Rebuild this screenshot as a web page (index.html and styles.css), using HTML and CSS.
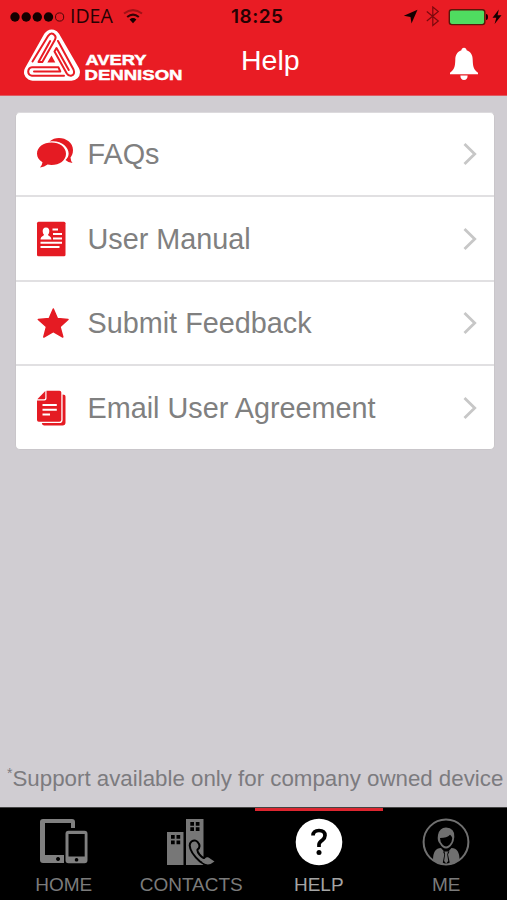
FILE: index.html
```html
<!DOCTYPE html>
<html lang="en">
<head>
<meta charset="utf-8">
<title>Help</title>
<link rel="stylesheet" href="styles.css">
</head>
<body>
<div class="app">
  <header class="header">
    <div class="status">
      <svg class="signal" width="55" height="12" viewBox="0 0 55 12"><g fill="#160000"><circle cx="5" cy="6" r="4.7"/><circle cx="16.2" cy="6" r="4.7"/><circle cx="27.3" cy="6" r="4.7"/><circle cx="38.5" cy="6" r="4.7"/></g><circle cx="49.6" cy="6" r="4.1" fill="none" stroke="#4b0708" stroke-width="1"/></svg>
      <span class="carrier">IDEA</span>
      <svg class="wifi" width="20" height="15" viewBox="0 0 20 15"><g fill="none" stroke-width="2.1"><path d="M1 4.500Q10-2.300 19 4.500" stroke="#a11116"/><path d="M4.200 8Q10 3.200 15.800 8" stroke="#360305"/></g><path d="M6.600 10.400Q10 7.600 13.400 10.400L10 14.200z" fill="#160000"/></svg>
      <time class="clock">18:25</time>
      <svg class="indicators" width="104" height="22" viewBox="403 5 104 22"><path d="M403.800 14.800L417.500 8.800 411.500 22.500 410.500 16z" fill="#160000"/><path d="M426.800 10.500L438.300 20 432.800 24.500V6L438.300 10.500 426.800 20" fill="none" stroke="#7c090d" stroke-width="1.200"/><rect x="449.300" y="8.800" width="35.500" height="14.800" rx="2.500" fill="#4fdc60" stroke="#5c1609" stroke-width="1.400"/><path d="M486 13q2 0 2 3t-2 3z" fill="#160000"/><path d="M498.800 8.500L492.500 16.700H496.300L494.600 23 501.500 14.200H497.600z" fill="#160000"/></svg>
    </div>
    <div class="brand-bar">
      <svg class="logo" width="162" height="56" viewBox="22 28 162 56" aria-label="Avery Dennison">
        <path d="M51.700 38L32.500 72.200H71.500z" fill="#fff" stroke="#fff" stroke-width="17" stroke-linejoin="round"/>
        <g fill="none" stroke="#e91c24" stroke-width="2" stroke-linecap="round" stroke-linejoin="round"><path d="M32.500 61.500L48.200 35.800Q51.500 31.500 55 35.600 56.300 37.500 54.800 40L42.300 62H38.500L50.200 41"/><path d="M58 41L73.500 69.500Q75.500 74.500 71 75.800 68.300 76 66.800 73.500L54.500 51.500 56.500 48 68.800 70"/><path d="M64 75.800H32Q28.200 75 28.200 71.500 28.500 67.500 32 67.300H58.500L60.300 71.500H34"/></g>
        <path d="M51.500 55.500L47.300 62.500H55.300z" fill="#e91c24"/>
        <g class="logo-text"><text x="85.500" y="64.700" textLength="61" lengthAdjust="spacingAndGlyphs">AVERY</text><text x="84.500" y="80" textLength="98" lengthAdjust="spacingAndGlyphs">DENNISON</text></g>
      </svg>
      <h1 class="title">Help</h1>
      <svg class="bell" width="30" height="34" viewBox="0 0 30 34"><path d="M15 .8c1.500 0 2.500 1 2.600 2.500 4.500 1.500 6 5 6.100 9.500.2 6.500.8 10 5.300 13V27.300H1V25.800c4.500-3 5.100-6.500 5.300-13 .1-4.500 1.600-8 6.100-9.500C12.500 1.800 13.500.8 15 .8z" fill="#fff"/><path d="M11.400 28.600h7.200q0 4.400-3.600 4.400t-3.600-4.400z" fill="#fff"/></svg>
    </div>
  </header>

  <main class="content">
    <ul class="menu">
      <li class="row">
        <svg class="icon" width="38" height="38" viewBox="0 0 38 38"><g fill="#e51b23"><path d="M13.500 6.500C22-1 37 4.500 37 15c0 4-1.500 6-2.500 7.500q.2 3.300 2 5.500-4.500-.3-7-3C38 17.500 28 4 13.500 6.500z"/><path d="M15.500 7.500C23.500 7.500 30 12 30 18.800s-6.500 11.200-14.500 11.200q-2 0-4-.4-3 2.400-7.500 2.900 2.200-2.500 2.500-5.300C3 25 1 22.500 1 18.800 1 12 7.500 7.500 15.500 7.500z"/></g></svg>
        <span class="label">FAQs</span>
        <svg class="chevron" width="14" height="24" viewBox="0 0 14 24"><path d="M1.500 2L11.700 12 1.500 22"/></svg>
      </li>
      <li class="row">
        <svg class="icon" width="38" height="38" viewBox="0 0 38 38"><rect x="1" y="1.700" width="28.500" height="34.600" rx="1.500" fill="#e51b23"/><path d="M10 7.500c2.500 0 3.500 2 3.300 4-.2 2-.9 2.700-1.300 3.300.2 1.500 3 1 3.500 4.700h-11c.5-3.700 3.300-3.200 3.500-4.700-.4-.6-1.100-1.300-1.300-3.300-.2-2 .8-4 3.300-4z" fill="#fff"/><path d="M16.500 9.500H22M17 14H26M17 18.500H26M4.500 22.700H26M4.500 27H23.500" stroke="#fff" stroke-width="1.900"/></svg>
        <span class="label">User Manual</span>
        <svg class="chevron" width="14" height="24" viewBox="0 0 14 24"><path d="M1.500 2L11.700 12 1.500 22"/></svg>
      </li>
      <li class="row">
        <svg class="icon" width="38" height="38" viewBox="0 0 38 38"><path d="M17.300 5L21.400 14.500 32 15.500 24 22.700 26.800 33 17.300 27.500 7.800 33 10.500 22.700 2.300 15.500 13.200 14.500z" fill="#e51b23" stroke="#e51b23" stroke-width="1.500" stroke-linejoin="round"/></svg>
        <span class="label">Submit Feedback</span>
        <svg class="chevron" width="14" height="24" viewBox="0 0 14 24"><path d="M1.500 2L11.700 12 1.500 22"/></svg>
      </li>
      <li class="row">
        <svg class="icon" width="38" height="38" viewBox="0 0 38 38"><path d="M10.500 1.700H23.500q1.800 0 1.800 1.800V31q0 1.800-1.800 1.800H2.800Q1 32.800 1 31V11.500H8.500q2 0 2-2z" fill="#e51b23"/><path d="M9.300 1.900V8.700q0 1.500-1.500 1.500H1.300z" fill="#e51b23"/><path d="M26.600 5.500q2.900.1 2.900 2.300V33.500q0 3-3 3H8q-2 0-2.200-2.400H23.500q3.100 0 3.100-3.100z" fill="#e51b23"/><path d="M6.500 16H20.800M6.500 20.700H20.800M6.500 25.500H14" stroke="#fff" stroke-width="1.900"/></svg>
        <span class="label">Email User Agreement</span>
        <svg class="chevron" width="14" height="24" viewBox="0 0 14 24"><path d="M1.500 2L11.700 12 1.500 22"/></svg>
      </li>
    </ul>
    <p class="note"><span class="star">*</span>Support available only for company owned device</p>
  </main>

  <nav class="tabs">
    <a class="tab">
      <svg class="tab-icon" width="52" height="50" viewBox="0 0 52 50"><path fill-rule="evenodd" d="M5 2H34q3 0 3 3v6H33V6H7V38H26V46H5q-3 0-3-3V5q0-3 3-3zM20 40a2 2 0 1 0 .1 0z" fill="#808080"/><path fill-rule="evenodd" d="M30.500 13.700H46.500q3 0 3 3V43.300q0 3-3 3H30.500q-3 0-3-3V16.700q0-3 3-3zM30.500 17V39.500H46.700V17zM38.500 41a1.800 1.800 0 1 0 .1 0z" fill="#808080"/></svg>
      <span class="tab-label">HOME</span>
    </a>
    <a class="tab">
      <svg class="tab-icon" width="52" height="50" viewBox="0 0 52 50"><path d="M2 15H18.500V48H2zM21 2H38.500V48H21z" fill="#777"/><path d="M6 18h3.700v3.700H6zM11.500 18h3.700v3.700H11.500zM6 23.500h3.700v3.700H6zM11.500 23.500h3.700v3.700H11.500zM25.300 5H29v3.700H25.300zM30.800 5h3.700v3.700H30.800zM25.300 10.300H29V14H25.300zM30.800 10.300h3.700V14H30.800z" fill="#000"/><path d="M26.500 24.500Q31 21.500 34 27 35.500 30.500 32.500 32.500 32 34.500 34.500 37.500 38 41.500 40 41 42 38.500 45 41L49.500 44.500Q43 51 35 44.500 25 35.500 24.700 28.500 24.700 26 26.500 24.500z" fill="#777" stroke="#000" stroke-width="2"/><path d="M40 41.500Q42 39 45 41.500L49.500 44.500Q43 50 37 45z" fill="#777"/></svg>
      <span class="tab-label">CONTACTS</span>
    </a>
    <a class="tab active">
      <svg class="tab-icon" width="52" height="50" viewBox="0 0 52 50"><circle cx="26" cy="25" r="23.300" fill="#fff"/><path d="M20 18.500Q20.300 13.500 26 13.500 32 13.500 32 18.500 32 21 29.500 23 26 25.500 26 27.500V30" fill="none" stroke="#000" stroke-width="3.700"/><circle cx="26" cy="35.500" r="2.500"/></svg>
      <span class="tab-label">HELP</span>
    </a>
    <a class="tab">
      <svg class="tab-icon" width="52" height="50" viewBox="0 0 52 50"><path d="M13 43Q13 31 21 31L25 35.500H27.500L31.500 31Q39.500 31 39.500 43 33 48 26 48T13 43z" fill="#707070"/><path d="M23 34.500h6.500l-1.500 3 1.700 8L26 48.500 22.800 45.500 24.300 37.500z" fill="#000"/><path d="M24.500 34.500h3.600l-.9 3 1 6.500-2 2.500L24.100 44l1-6.500z" fill="#707070"/><path d="M26 10.500Q35 11 34.300 20 34 24 32.500 26.500 29.500 31.500 26 31.500T19.700 26.500Q17 24 18 18 19.500 10.500 26 10.500z" fill="#707070"/><path d="M20 21Q27 21 30 17.800 31.500 18.500 32.300 21 32 25.500 29.500 27.800 26 31 22.700 27.800 20 25 20 21z" fill="#000"/><circle cx="26" cy="25" r="22.400" fill="none" stroke="#707070" stroke-width="2"/></svg>
      <span class="tab-label">ME</span>
    </a>
  </nav>
</div>
</body>
</html>
```
FILE: styles.css
```css
* { box-sizing: border-box; }
body { margin: 0; background: #d0cdd2; font-family: "Liberation Sans", Arial, sans-serif; }
.app { width: 507px; height: 900px; display: flex; flex-direction: column; overflow: hidden; }
svg { display: block; flex: none; }

.header { height: 96px; background: #e91c24; border-bottom: 1px solid #df5960; }
.status { height: 28px; padding: 5px 0 0 10px; display: flex; align-items: center; color: #260203; }
.carrier { width: 44px; margin-left: 5px; font: 19.500px/22px "Open Sans", sans-serif; position: relative; top: -1px; }
.wifi { margin-left: 9px; }
.clock { width: 54px; margin-left: 88px; font: 600 19px/22px Inter, sans-serif; letter-spacing: 0.500px; }
.indicators { margin-left: auto; }
.brand-bar { height: 67px; display: flex; align-items: flex-start; padding-left: 22px; }
.logo-text { fill: #fff; font: bold 15.500px/1 "Liberation Sans", Arial, sans-serif; stroke: #fff; stroke-width: 0.500px; }
.title { width: 62px; margin: 16px 0 0 57px; color: #fff; font-size: 28.500px; line-height: 32px; font-weight: 400; }
.bell { margin: 19px 28px 0 auto; }

.content { flex: 1; display: flex; flex-direction: column; justify-content: space-between; }
.menu { list-style: none; margin: 16px 12.500px 0 15px; padding: 0; border: 1px solid #c9c6ca; border-top-color: #dcdadd; border-radius: 5px; background: #fff; overflow: hidden; }
.row { height: 84.400px; padding: 0 17px 0 20px; display: flex; align-items: center; border-bottom: 2px solid #e1e0e2; }
.row:last-child { height: 83px; border-bottom: 0; }
.label { flex: 1; margin-left: 13.500px; color: #808080; font-size: 28.800px; line-height: 36px; white-space: nowrap; }
.chevron { fill: none; stroke: #c7c7c7; stroke-width: 2.800px; }
.note { margin: 0 0 14px 7px; color: #7c7b7f; font-size: 22.300px; line-height: 28px; white-space: nowrap; }
.star { display: inline-block; width: 5.500px; font-size: 14px; line-height: 10px; vertical-align: 8px; }

.tabs { height: 93px; width: 510px; display: grid; grid-template-columns: repeat(4, 1fr); background: #000; border-top: 1px solid #444; }
.tab { display: flex; flex-direction: column; align-items: center; padding-top: 6px; border-top: 3px solid transparent; color: #7b7b7b; }
.tab-label { margin-top: 7px; font-size: 19px; line-height: 22px; }
.active { border-top-color: #dd2630; color: #a5a5a5; }
```
